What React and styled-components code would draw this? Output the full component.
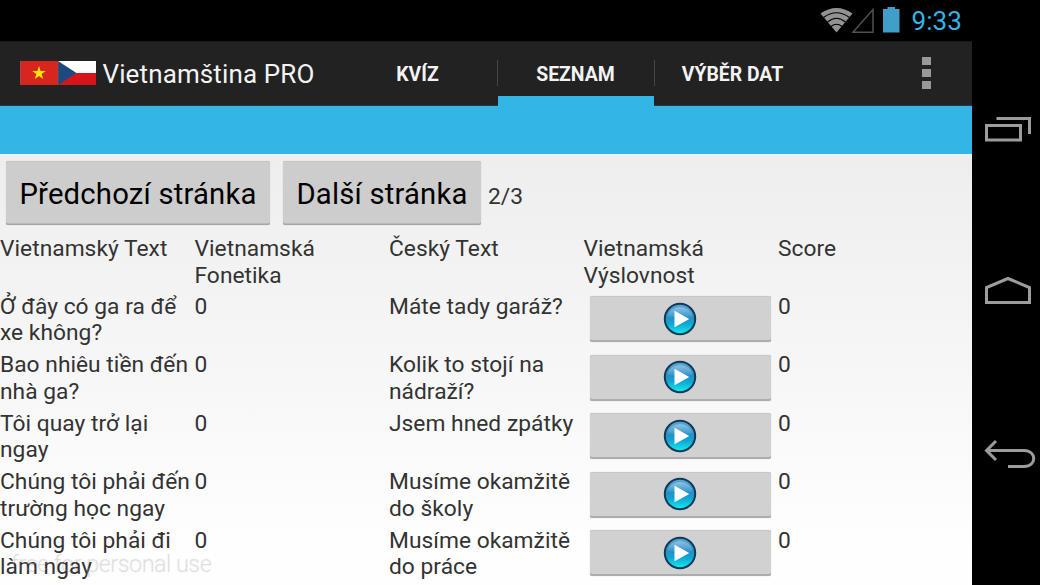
import styled, { createGlobalStyle } from "styled-components";

const GlobalStyle = createGlobalStyle`
  * {
    box-sizing: border-box;
  }
  body {
    margin: 0;
    overflow: hidden;
    background: #000;
    font-family: Roboto, "Noto Sans", sans-serif;
  }
  button {
    font-family: inherit;
    border: none;
    padding: 0;
  }
`;

const Device = styled.div`
  display: grid;
  grid-template-columns: 972px 68px;
  width: 1040px;
  height: 585px;
  overflow: hidden;
  background: #000;
`;

const Screen = styled.div`
  display: flex;
  flex-direction: column;
  height: 585px;
  overflow: hidden;
  position: relative;
`;

const StatusBar = styled.div`
  display: flex;
  flex: none;
  justify-content: flex-end;
  height: 41px;
  padding-right: 10px;
  color: #33b5e5;
`;

const Clock = styled.div`
  width: 51px;
  padding-left: 0.5px;
  font-size: 26px;
  line-height: 43px;
  letter-spacing: 0.1px;
  white-space: nowrap;
`;

const ActionBar = styled.div`
  display: flex;
  flex: none;
  height: 65px;
  background: #222;
  border-bottom: 1px solid #2b383e;
  border-top: 1px solid #1a1a1a;
  color: #f3f3f3;
`;

const Brand = styled.div`
  display: flex;
  align-items: center;
  width: 339px;
  padding-left: 20px;
  gap: 6.5px;
  svg {
    margin-bottom: 2px;
  }
`;

const Title = styled.div`
  font-size: 26px;
  letter-spacing: 0.12px;
  white-space: nowrap;
`;

const Tab = styled.div`
  display: flex;
  align-items: center;
  justify-content: center;
  width: ${(props) => props.$width};
  font-size: 19.4px;
  font-weight: 700;
  white-space: nowrap;
  height: 65px;
  margin-top: -1px;
  padding: 1px 1px 0 0;
  box-shadow: ${(props) => (props.$active ? "inset 0 -10px #33b5e5" : "none")};
`;

const Divider = styled.div`
  width: 1px;
  height: 26px;
  margin-top: 18px;
  background: #464646;
`;

const Overflow = styled.div`
  display: flex;
  flex-direction: column;
  gap: 4px;
  margin: 15px 0 0 111px;
  span {
    width: 9px;
    height: 8px;
    background: #999;
  }
`;

const BlueBar = styled.div`
  flex: none;
  height: 48px;
  background: #33b5e5;
`;

const Content = styled.div`
  flex: 1;
  background: linear-gradient(#eeeeee, #f4f4f4 35%, #fefefe 90%);
  color: #333;
`;

const Pager = styled.div`
  display: flex;
  height: 82px;
  padding: 7px 0 0 6px;
`;

const PageButton = styled.button`
  width: ${(props) => props.$width};
  height: 64px;
  padding-top: 2px;
  margin-right: ${(props) => props.$gap};
  border-radius: 2px;
  background: #cdcdcd;
  box-shadow: inset 0 -1.5px #a5a5a5, inset 0 1px #c6c6c6, 0 0 1px #bbb;
  color: #000;
  font-size: 29.25px;
  letter-spacing: 0.2px;
  white-space: nowrap;
`;

const PageCount = styled.div`
  padding-top: 22px;
  font-size: 22.75px;
  line-height: 27px;
`;

const Row = styled.div`
  display: grid;
  grid-template-columns: 194.5px 194.5px 194.5px 194.5px 1fr;
  height: ${(props) => (props.$header ? "57.5px" : "58.5px")};
`;

const Cell = styled.div`
  font-size: 22.75px;
  line-height: 26.5px;
  letter-spacing: 0.03px;
  white-space: pre;
`;

const PlayButton = styled.button`
  display: flex;
  align-items: center;
  justify-content: center;
  width: 181.5px;
  height: 46px;
  margin: 2.5px 0 0 6px;
  padding-bottom: 1px;
  border-radius: 2px;
  background: #d1d1d1;
  box-shadow: inset 0 -2px #adadad, inset 0 1px #c8c8c8, 0 0 1px #bbb;
`;

const Watermark = styled.div`
  position: absolute;
  left: 10px;
  top: 549px;
  font-size: 23.4px;
  font-weight: 300;
  line-height: 28px;
  letter-spacing: -0.5px;
  color: rgba(255, 255, 255, 0.2);
  text-shadow: 1px 1px 1px rgba(0, 0, 0, 0.16);
  white-space: nowrap;
`;

const NavBar = styled.div`
  display: flex;
  flex-direction: column;
  align-items: flex-start;
  padding: 116px 0 0 12px;
`;

const NavIcon = styled.svg`
  display: block;
  flex: none;
  fill: none;
  stroke: #9c9c9c;
  stroke-width: 3;
  margin-bottom: ${(props) => props.$gap || "0"};
`;

const rows = [
  { vi: "Ở đây có ga ra để\nxe không?", cs: "Máte tady garáž?" },
  { vi: "Bao nhiêu tiền đến\nnhà ga?", cs: "Kolik to stojí na\nnádraží?" },
  { vi: "Tôi quay trở lại\nngay", cs: "Jsem hned zpátky" },
  { vi: "Chúng tôi phải đến\ntrường học ngay", cs: "Musíme okamžitě\ndo školy" },
  { vi: "Chúng tôi phải đi\nlàm ngay", cs: "Musíme okamžitě\ndo práce" },
];

function StatusIcons() {
  return (
    <svg width="91" height="41" viewBox="0 0 91 41">
      <path d="M0.5 13.5Q16.5 2.5 32.5 13.5L16.5 32.5Z" fill="#929292" />
      <g fill="none" stroke="#000" strokeWidth="1.1">
        <path d="M3.5 17.5Q16.5 8 29.5 17.5" />
        <path d="M7.5 22Q16.5 14.5 25.5 22" />
        <path d="M11 26.5Q16.5 22 22 26.5" />
      </g>
      <path d="M33 32.3L53 9.5V32.3Z" fill="none" stroke="#505050" strokeWidth="1.5" />
      <path d="M63 9H67.5V7H75V9H79.5V32.5H63Z" fill="#3f9fc9" />
    </svg>
  );
}

function Flags() {
  return (
    <svg width="76" height="24" viewBox="0 0 76 24">
      <rect width="38" height="24" fill="#d8251d" />
      <path
        d="M19 5L20.6 10H25.8L21.6 13.1L23.2 18L19 15L14.8 18L16.4 13.1L12.2 10H17.4Z"
        fill="#ffe600"
      />
      <rect x="38" width="38" height="12" fill="#fff" />
      <rect x="38" y="12" width="38" height="12" fill="#d7141a" />
      <path d="M38 0L56.5 12L38 24Z" fill="#1c4a80" />
      <path d="M0.5 0V24M38 0V24" stroke="#8b5a5a" strokeWidth="0.6" />
    </svg>
  );
}

function PlayIcon() {
  return (
    <svg width="34" height="34" viewBox="0 0 34 34">
      <defs>
        <linearGradient id="orb" x1="0" y1="0" x2="0" y2="1">
          <stop offset="0" stopColor="#5fa5d6" />
          <stop offset="0.45" stopColor="#2490c6" />
          <stop offset="0.65" stopColor="#10a5d2" />
          <stop offset="1" stopColor="#12f0f0" />
        </linearGradient>
        <linearGradient id="gloss" x1="0" y1="0" x2="0" y2="1">
          <stop offset="0" stopColor="#fff" stopOpacity="0.35" />
          <stop offset="1" stopColor="#fff" stopOpacity="0.02" />
        </linearGradient>
      </defs>
      <circle cx="17" cy="17" r="15.2" fill="url(#orb)" stroke="#123a55" strokeWidth="2" />
      <path d="M4 14.5A13.3 12 0 0 1 30 14.5Q17 18 4 14.5Z" fill="url(#gloss)" />
      <path d="M11.5 8.7L26.2 17L11.5 25.3Z" fill="#fff" />
    </svg>
  );
}

export default function App() {
  return (
    <>
      <GlobalStyle />
      <Device>
        <Screen>
          <StatusBar>
            <StatusIcons />
            <Clock>9:33</Clock>
          </StatusBar>
          <ActionBar>
            <Brand>
              <Flags />
              <Title>Vietnamština PRO</Title>
            </Brand>
            <Tab $width="158px">KVÍZ</Tab>
            <Divider />
            <Tab $width="156px" $active>
              SEZNAM
            </Tab>
            <Divider />
            <Tab $width="156px">VÝBĚR DAT</Tab>
            <Overflow>
              <span />
              <span />
              <span />
            </Overflow>
          </ActionBar>
          <BlueBar />
          <Content>
            <Pager>
              <PageButton $width="264px" $gap="13px">
                Předchozí stránka
              </PageButton>
              <PageButton $width="198px" $gap="7px">
                Další stránka
              </PageButton>
              <PageCount>2/3</PageCount>
            </Pager>
            <Row $header>
              <Cell>Vietnamský Text</Cell>
              <Cell>{"Vietnamská\nFonetika"}</Cell>
              <Cell>Český Text</Cell>
              <Cell>{"Vietnamská\nVýslovnost"}</Cell>
              <Cell>Score</Cell>
            </Row>
            {rows.map((row) => (
              <Row key={row.vi}>
                <Cell>{row.vi}</Cell>
                <Cell>0</Cell>
                <Cell>{row.cs}</Cell>
                <PlayButton>
                  <PlayIcon />
                </PlayButton>
                <Cell>0</Cell>
              </Row>
            ))}
          </Content>
          <Watermark>free for personal use</Watermark>
        </Screen>
        <NavBar>
          <NavIcon width="48" height="28" $gap="132px">
            <path d="M2.5 9.5H36.5V24H2.5ZM12.5 2.5H45.5V18" />
          </NavIcon>
          <NavIcon width="48" height="30" $gap="132px">
            <path d="M2.5 26.5V11.5L24 2.5L45.5 11.5V26.5Z" />
          </NavIcon>
          <NavIcon width="52" height="34">
            <path d="M2 12.5H40C53 12.5 53 28.5 40 28.5H24M12 3L2.5 12.5L12 22" />
          </NavIcon>
        </NavBar>
      </Device>
    </>
  );
}
